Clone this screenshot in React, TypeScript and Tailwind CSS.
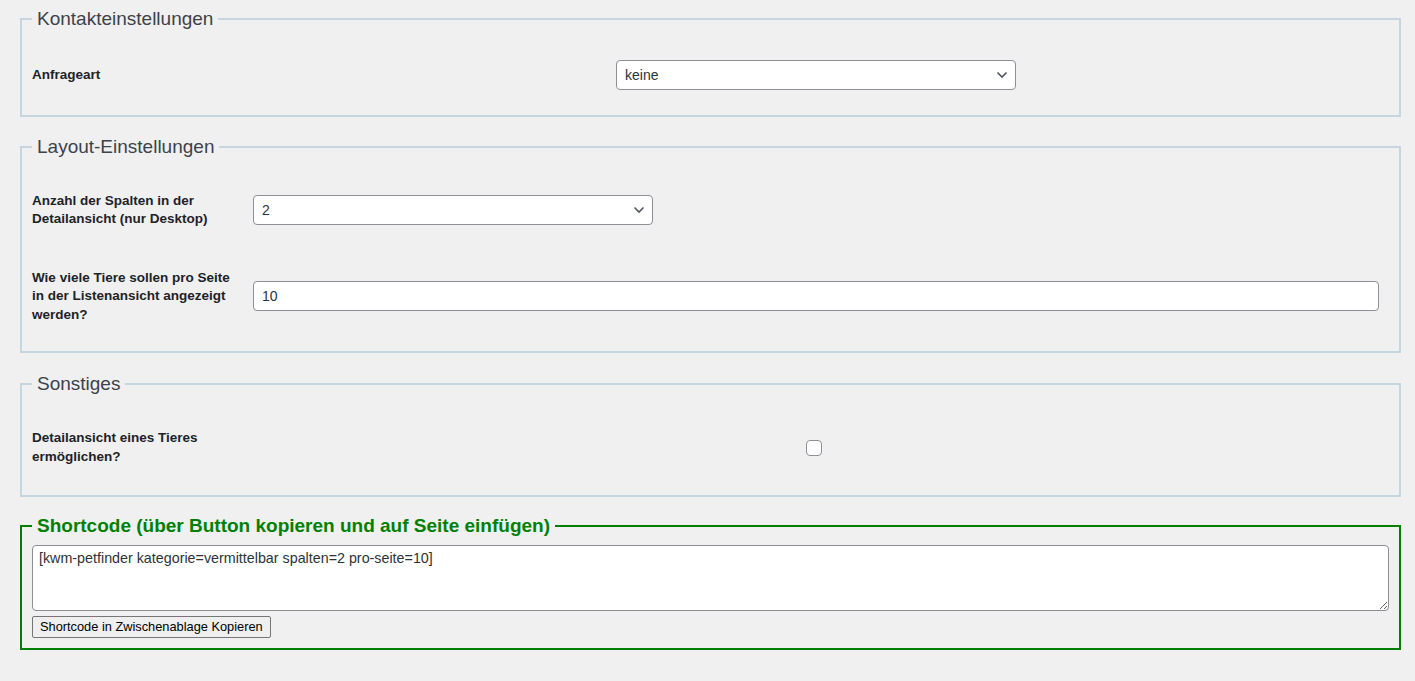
import React from "react";

function Chevron() {
  return (
    <svg width="12" height="8" viewBox="0 0 12 8" className="pointer-events-none absolute right-[8px] top-1/2 -translate-y-1/2">
      <path d="M1.5 1.5 6 6l4.5-4.5" fill="none" stroke="#50575e" strokeWidth="1.6" />
    </svg>
  );
}

function Select({ value }: { value: string }) {
  return (
    <div className="relative w-[400px]">
      <select
        defaultValue={value}
        className="block h-[30px] w-full appearance-none rounded-[4px] border border-[#8c8f94] bg-white pl-[8px] pr-[24px] text-[14px] text-[#2c3338] outline-none"
      >
        <option value={value}>{value}</option>
      </select>
      <Chevron />
    </div>
  );
}

const label = "py-[20px] text-[13.5px] font-bold leading-[18.5px] text-[#1d2327]";
const legend = "px-[5px] text-[19px] leading-[22px] text-[#3c434a]";

export default function App() {
  return (
    <div className="min-h-screen bg-[#f0f0f1] pl-[20px] pr-[14px] pt-[8px] font-['Liberation_Sans',Arial,sans-serif]">
      <fieldset className="border-2 border-[#c5d6e1] px-[10px] pt-[16px] pb-[10px]">
        <legend className={legend}>Kontakteinstellungen</legend>
        <div className="flex items-center">
          <div className={`w-[564px] mr-[10px] ${label}`}>Anfrageart</div>
          <div className="flex-1 px-[10px]">
            <Select value="keine" />
          </div>
        </div>
      </fieldset>

      <fieldset className="mt-[19px] border-2 border-[#c5d6e1] px-[10px] pt-[14px] pb-[7px]">
        <legend className={legend}>Layout-Einstellungen</legend>
        <div className="flex items-center">
          <div className={`w-[201px] mr-[10px] ${label}`}>Anzahl der Spalten in der Detailansicht (nur Desktop)</div>
          <div className="flex-1 px-[10px]">
            <Select value="2" />
          </div>
        </div>
        <div className="flex items-center">
          <div className={`w-[201px] mr-[10px] ${label}`}>Wie viele Tiere sollen pro Seite in der Listenansicht angezeigt werden?</div>
          <div className="flex-1 px-[10px]">
            <input
              type="text"
              defaultValue="10"
              className="block h-[30px] w-full rounded-[4px] border border-[#8c8f94] bg-white px-[8px] text-[14px] text-[#2c3338] outline-none"
            />
          </div>
        </div>
      </fieldset>

      <fieldset className="mt-[20px] border-2 border-[#c5d6e1] px-[10px] pt-[14px] pb-[9px]">
        <legend className={legend}>Sonstiges</legend>
        <div className="flex items-center">
          <div className={`w-[201px] mr-[10px] ${label}`}>Detailansicht eines Tieres ermöglichen?</div>
          <div className="flex-1 px-[10px]">
            <input
              type="checkbox"
              className="ml-[553px] block h-4 w-4 appearance-none rounded-[4px] border border-[#8c8f94] bg-white"
            />
          </div>
        </div>
      </fieldset>

      <fieldset className="mt-[18px] border-2 border-[#008000] px-[10px] pt-[8px] pb-[10px]">
        <legend className="px-[5px] text-[19px] font-bold leading-[22px] text-[#008000]">
          Shortcode (über Button kopieren und auf Seite einfügen)
        </legend>
        <textarea
          defaultValue="[kwm-petfinder kategorie=vermittelbar spalten=2 pro-seite=10]"
          className="block h-[66px] w-full rounded-[4px] border border-[#8c8f94] bg-white px-[6px] py-[2px] text-[14.3px] leading-[20px] text-[#2c3338] outline-none"
        />
        <button
          type="button"
          className="mt-[5px] block h-[22px] rounded-[2px] border border-[#767676] bg-[#efefef] px-[7px] text-[12.8px] text-black"
        >
          Shortcode in Zwischenablage Kopieren
        </button>
      </fieldset>
    </div>
  );
}
